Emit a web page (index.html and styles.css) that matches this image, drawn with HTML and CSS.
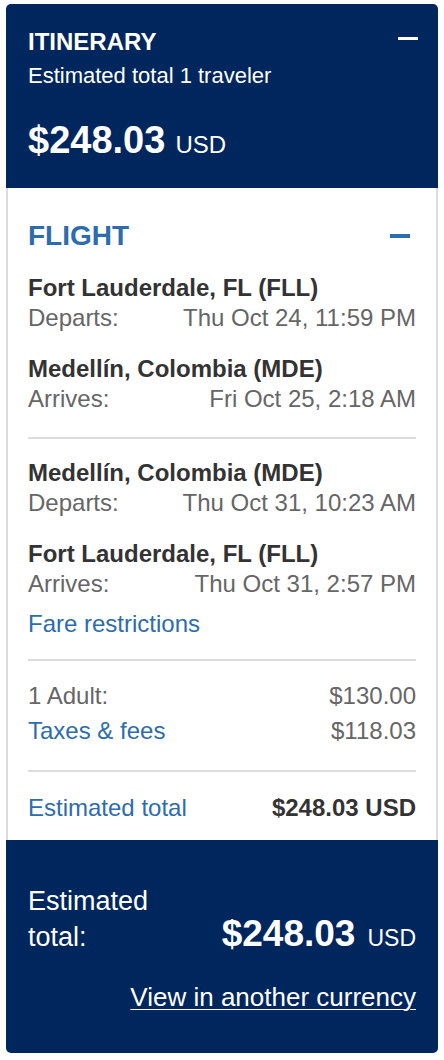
FILE: index.html
```html
<!DOCTYPE html>
<html lang="en">
<head>
<meta charset="utf-8">
<title>Itinerary</title>
<link rel="stylesheet" href="styles.css">
</head>
<body>
<div class="card">
  <header class="head">
    <div class="head-top">
      <div class="head-title">ITINERARY</div>
      <span class="minus minus-white"></span>
    </div>
    <div class="head-sub">Estimated total 1 traveler</div>
    <div class="head-price"><span class="amt">$248.03</span><span class="cur">USD</span></div>
  </header>

  <section class="body">
    <div class="sec-top">
      <div class="sec-title">FLIGHT</div>
      <span class="minus minus-blue"></span>
    </div>

    <div class="leg">
      <div class="seg">
        <div class="place">Fort Lauderdale, FL (FLL)</div>
        <div class="row"><span>Departs:</span><span>Thu Oct 24, 11:59 PM</span></div>
      </div>
      <div class="seg">
        <div class="place">Medellín, Colombia (MDE)</div>
        <div class="row"><span>Arrives:</span><span>Fri Oct 25, 2:18 AM</span></div>
      </div>
    </div>

    <hr class="rule rule-a">

    <div class="leg">
      <div class="seg">
        <div class="place">Medellín, Colombia (MDE)</div>
        <div class="row"><span>Departs:</span><span>Thu Oct 31, 10:23 AM</span></div>
      </div>
      <div class="seg">
        <div class="place">Fort Lauderdale, FL (FLL)</div>
        <div class="row"><span>Arrives:</span><span>Thu Oct 31, 2:57 PM</span></div>
      </div>
    </div>
    <a class="link fare" href="#">Fare restrictions</a>

    <hr class="rule rule-b">

    <div class="prices">
      <div class="row"><span>1 Adult:</span><span>$130.00</span></div>
      <div class="row"><a class="link" href="#">Taxes &amp; fees</a><span>$118.03</span></div>
    </div>

    <hr class="rule rule-c">

    <div class="row"><a class="link" href="#">Estimated total</a><span class="total-val">$248.03 USD</span></div>
  </section>

  <footer class="foot">
    <div class="foot-row">
      <div class="foot-label">Estimated total:</div>
      <div class="foot-price"><span class="amt amt-sm">$248.03</span><span class="cur cur-sm">USD</span></div>
    </div>
    <div class="foot-link-wrap"><a class="foot-link" href="#">View in another currency</a></div>
  </footer>
</div>
</body>
</html>
```

FILE: styles.css
```css
* { box-sizing: border-box; }
html, body { margin: 0; padding: 0; background: #fff; }
body {
  padding: 4px 6px 8px 6px;
  font-family: "Liberation Sans", Arial, Helvetica, sans-serif;
  color: #333;
}
.card {
  width: 432px;
  border-radius: 5px;
  overflow: hidden;
}
.head {
  background: #00265e;
  color: #fff;
  padding: 24px 20px 18px 22px;
}
.head-top {
  display: flex;
  justify-content: space-between;
  align-items: flex-start;
  height: 28px;
}
.head-title {
  font-size: 24px;
  font-weight: 700;
  line-height: 28px;
}
.minus {
  display: block;
  width: 20px;
  height: 3px;
}
.minus-white { background: #fff; margin-top: 9px; }
.minus-blue { background: #2d6cad; margin-right: 6px; height: 4px; }
.head-sub {
  margin-top: 7px;
  font-size: 22px;
  line-height: 26px;
}
.head-price {
  margin-top: 29px;
  line-height: 44px;
  white-space: nowrap;
}
.amt {
  font-size: 38px;
  font-weight: 700;
}
.amt-sm { font-size: 37px; }
.cur {
  font-size: 24px;
  margin-left: 10px;
}
.cur-sm { font-size: 23px; margin-left: 12px; }

.body {
  background: #fff;
  border-left: 2px solid #dcdcdc;
  border-right: 2px solid #dcdcdc;
  padding: 32px 20px 17px 20px;
  font-size: 24px;
  line-height: 30px;
}
.sec-top {
  display: flex;
  justify-content: space-between;
  align-items: center;
  height: 32px;
  margin-bottom: 21px;
}
.sec-title {
  color: #2d6cad;
  font-size: 28px;
  font-weight: 700;
  line-height: 32px;
}
.leg {
  display: flex;
  flex-direction: column;
  gap: 21px;
}
.place {
  font-weight: 700;
  color: #333;
}
.row {
  display: flex;
  justify-content: space-between;
  color: #666;
}
.link {
  color: #2d6cad;
  text-decoration: none;
}
.fare {
  display: block;
  margin-top: 10px;
}
.rule {
  border: 0;
  height: 2px;
  background: #dcdcdc;
  margin: 0;
}
.rule-a { margin-top: 23px; margin-bottom: 19px; }
.rule-b { margin-top: 20px; margin-bottom: 20px; }
.rule-c { margin-top: 24px; margin-bottom: 21px; }
.prices {
  display: flex;
  flex-direction: column;
  gap: 5px;
}
.total-val {
  color: #333;
  font-weight: 700;
}

.foot {
  background: #00265e;
  color: #fff;
  padding: 43px 22px 37px 22px;
}
.foot-row {
  display: flex;
  justify-content: space-between;
  align-items: last baseline;
  gap: 20px;
}
.foot-label {
  flex: 1;
  font-size: 27px;
  line-height: 36px;
}
.foot-price {
  white-space: nowrap;
  line-height: 44px;
}
.foot-link-wrap {
  margin-top: 19px;
  text-align: right;
  line-height: 30px;
}
.foot-link {
  color: #fff;
  font-size: 26px;
  text-decoration: underline;
  text-underline-offset: 3px;
  text-decoration-thickness: 1px;
}
```
